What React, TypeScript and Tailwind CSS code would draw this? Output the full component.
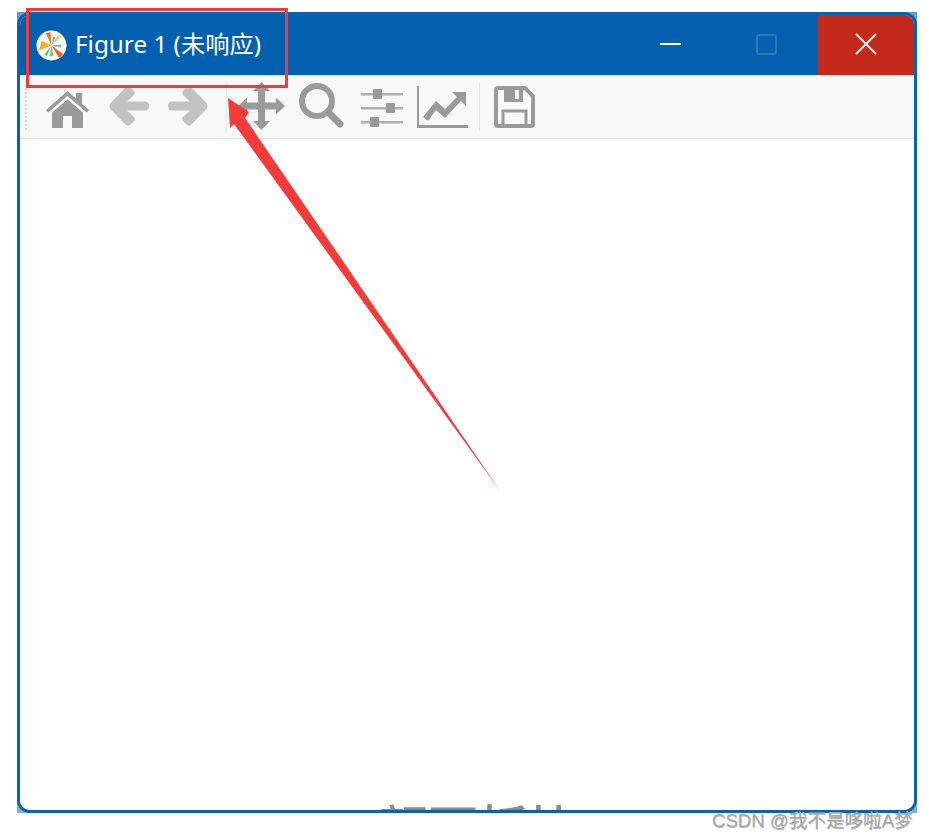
const iconDark = "#9a9a9a";
const iconLight = "#c2c2c2";

function MatplotlibLogo() {
  return (
    <svg width="31" height="31" viewBox="0 0 32 32" className="shrink-0">
      <circle cx="16" cy="16" r="15.5" fill="#fdfdfb" />
      <path d="M16 16 L3 21 L6 11 Z" fill="#f7b01e" />
      <path d="M16 16 L10 3 L15 2 Z" fill="#ee7a22" />
      <path d="M16 16 L28 25 L24 29 Z" fill="#e2622a" />
      <path d="M16 16 L23 5 L26 7 Z" fill="#c9de6a" />
      <path d="M16 16 L18 27 L14 27 Z" fill="#7cc576" />
      <path d="M16 16 L26 15 L26 18 Z" fill="#6fb7d8" />
      <path d="M16 16 L9 25 L11 27 Z" fill="#4fb59a" />
      <path d="M16 16 L18 7 L20 8 Z" fill="#8a7fc0" />
    </svg>
  );
}

function HomeIcon() {
  return (
    <svg width="43" height="38" viewBox="0 0 43 38" fill={iconDark}>
      <path d="M21.5 1 L30 8.5 V3 H36 V13.8 L43 20 L40.8 22.5 L21.5 6 L2.2 22.5 L0 20 Z" />
      <path d="M21.5 9.5 L37 22.5 V38 H26 V26 H17 V38 H6 V22.5 Z" />
    </svg>
  );
}

function ArrowIcon({ flip }: { flip?: boolean }) {
  return (
    <svg width="40" height="42" viewBox="0 0 40 42" fill={iconLight} className={flip ? "-scale-x-100" : ""}>
      <path d="M21 2 L25 6 Q26.5 8 25 10 L18 16.5 H36 Q40 16.5 40 21 Q40 25.5 36 25.5 H18 L25 32 Q26.5 34 25 36 L21 40 Q19 41.5 17 40 L1.5 24 Q-0.5 21 1.5 18 L17 2 Q19 0.5 21 2 Z" />
    </svg>
  );
}

function MoveIcon() {
  return (
    <svg width="47" height="48" viewBox="0 0 47 48" fill={iconDark}>
      <path d="M23.5 0 L32 9 H27 V20.5 H38 V15.5 L47 24 L38 32.5 V27.5 H27 V39 H32 L23.5 48 L15 39 H20 V27.5 H9 V32.5 L0 24 L9 15.5 V20.5 H20 V9 H15 Z" />
    </svg>
  );
}

function SearchIcon() {
  return (
    <svg width="45" height="45" viewBox="0 0 45 45" fill="none" stroke={iconDark}>
      <circle cx="18" cy="18" r="15" strokeWidth="6" />
      <path d="M29 29 L41 41" strokeWidth="7" strokeLinecap="round" />
    </svg>
  );
}

function SlidersIcon() {
  return (
    <svg width="42" height="38" viewBox="0 0 42 38" fill={iconDark}>
      <rect x="0" y="4" width="42" height="2.5" fill="#b0b0b0" />
      <rect x="0" y="18" width="42" height="2.5" fill="#b0b0b0" />
      <rect x="0" y="32" width="42" height="2.5" fill="#b0b0b0" />
      <rect x="12" y="0" width="9" height="10" rx="1" />
      <rect x="25" y="14" width="9" height="10" rx="1" />
      <rect x="9" y="28" width="9" height="10" rx="1" />
    </svg>
  );
}

function ChartIcon() {
  return (
    <svg width="51" height="42" viewBox="0 0 51 42" fill={iconDark}>
      <path d="M0 0 H2 V39 H51 V42 H0 Z" />
      <path d="M6 31 L19 15 L28 23 L40 11 L35 6 H49 V20 L44 15 L28 32 L19 24 L11 35 Z" />
    </svg>
  );
}

function SaveIcon() {
  return (
    <svg width="41" height="42" viewBox="0 0 41 42" fill="none" stroke={iconDark}>
      <path d="M4 2 H31 L39 10 V38 Q39 40 37 40 H4 Q2 40 2 38 V4 Q2 2 4 2 Z" strokeWidth="4" />
      <path d="M10 3 H29 V16 H10 Z" fill={iconDark} stroke="none" />
      <rect x="21" y="4" width="4" height="9" fill="#f8f8f8" stroke="none" />
      <path d="M9 39 V25 H32 V39" strokeWidth="3" />
    </svg>
  );
}

function RedArrow() {
  return (
    <svg className="absolute left-0 top-0 pointer-events-none" width="929" height="840">
      <polygon points="228,98 249,112 245,118 501,492 234,124 230,128" fill="#f53a3a" />
    </svg>
  );
}

export default function App() {
  return (
    <div className="relative w-[929px] h-[840px] overflow-hidden bg-white pl-[17px] pt-[12px] font-['Noto_Sans','Noto_Sans_CJK_SC',sans-serif]">
      <div className="w-[900px] h-[801px] bg-linear-to-b from-[#5f9bcf] to-[#7fb4b8]">
        <div className="flex h-full flex-col overflow-hidden rounded-[13px] border-[3px] border-[#0563b0] bg-white">
          {/* title bar */}
          <div className="flex h-[60px] shrink-0 items-center bg-[#0360ae] pl-[16px]">
            <MatplotlibLogo />
            <span className="ml-[8px] -mt-[1px] text-[24.3px] leading-none text-white">Figure 1 (未响应)</span>
            <div className="ml-auto flex h-full items-center">
              <div className="-mt-[2px] h-[2px] w-[21px] bg-white" />
              <div className="ml-[75px] -mt-[2px] h-[21px] w-[21px] rounded-[3px] border-2 border-[#2a78bd]" />
              <div className="ml-[41px] flex h-full w-[96px] items-center justify-center bg-[#c32a1a]">
                <svg width="22" height="22" viewBox="0 0 22 22" stroke="#f8eeee" strokeWidth="2" fill="none" className="-mt-[2px]">
                  <path d="M1 1 L21 21 M21 1 L1 21" />
                </svg>
              </div>
            </div>
          </div>
          {/* toolbar */}
          <div className="flex h-[64px] shrink-0 items-center border-y border-t-[#d7e6f3] border-b-[#e2e2e2] bg-[#f8f8f8]">
            <div className="ml-[5px] mt-[4px] h-[42px] w-[2px] border-l-2 border-dotted border-[#d4d4d4]" />
            <div className="ml-[19px] mt-[4px]"><HomeIcon /></div>
            <div className="ml-[20px] -mt-[2px]"><ArrowIcon /></div>
            <div className="ml-[19px] -mt-[2px]"><ArrowIcon flip /></div>
            <div className="ml-[18px] h-[50px] w-px bg-[#e6e6e6]" />
            <div className="ml-[11px] -mt-[2px]"><MoveIcon /></div>
            <div className="ml-[14px] -mt-[3px]"><SearchIcon /></div>
            <div className="ml-[17px] mt-[2px]"><SlidersIcon /></div>
            <div className="ml-[14px]"><ChartIcon /></div>
            <div className="ml-[11px] h-[48px] w-px bg-[#e6e6e6]" />
            <div className="ml-[14px]"><SaveIcon /></div>
          </div>
          {/* canvas, the figure's title is cut off by the window edge */}
          <div className="relative flex-1 overflow-hidden bg-white">
            <p className="absolute left-[358px] top-[664px] whitespace-nowrap text-[50px] leading-none font-medium text-[#8a8a8a]">颜面板块</p>
          </div>
        </div>
      </div>

      <RedArrow />
      <div className="absolute left-[26px] top-[8px] h-[80px] w-[262px] border-[3px] border-[#f53a3a]" />
      <div className="absolute left-[712px] top-[807px] whitespace-nowrap font-['Liberation_Sans','Noto_Sans_CJK_SC',sans-serif] text-[18.6px] text-[#a8a8a8] [text-shadow:0.5px_0.5px_0.5px_#bbb]">
        CSDN @我不是哆啦A梦
      </div>
    </div>
  );
}
